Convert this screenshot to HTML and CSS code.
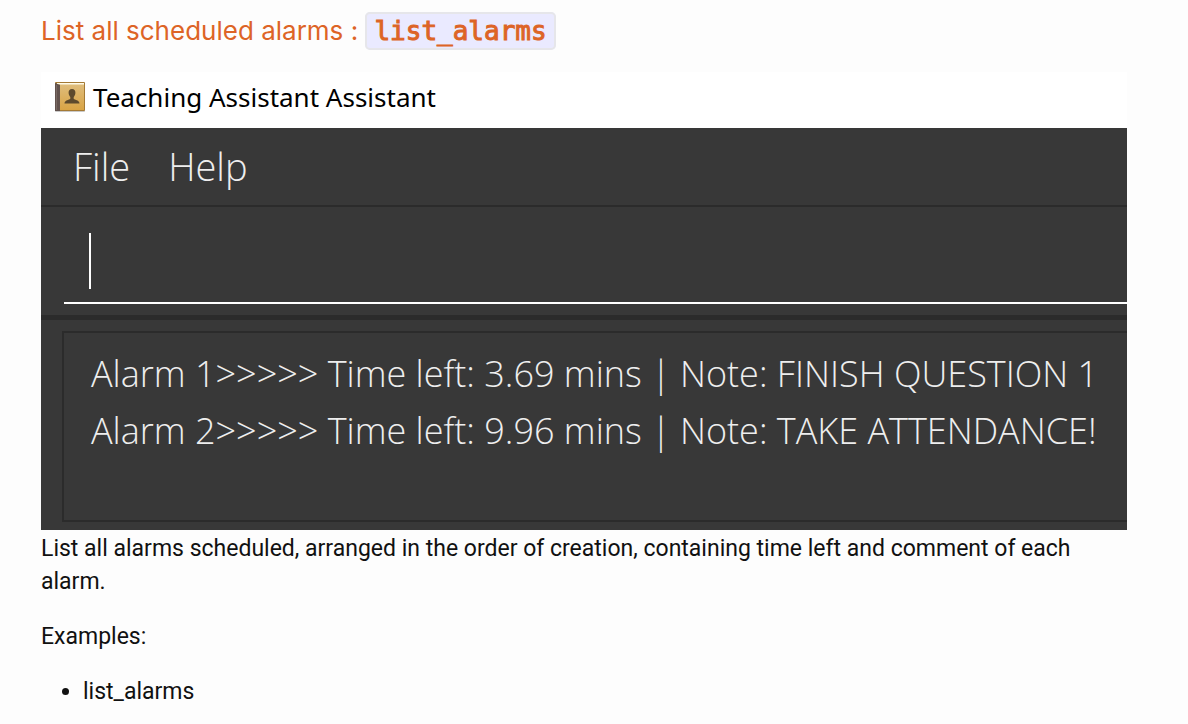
FILE: index.html
```html
<!DOCTYPE html>
<html lang="en">
<head>
<meta charset="utf-8">
<meta name="viewport" content="width=device-width, initial-scale=1">
<title>List all scheduled alarms</title>
<link rel="stylesheet" href="styles.css">
</head>
<body>
<main class="content">
  <h3 class="heading">List all scheduled alarms : <code class="chip">list_alarms</code></h3>
  <section class="app" aria-label="Teaching Assistant Assistant">
    <header class="titlebar">
      <svg class="app-icon" viewBox="0 0 32 32" aria-hidden="true">
        <defs>
          <linearGradient id="cover" x1="0" y1="0" x2="0" y2="1">
            <stop offset="0" stop-color="#dfbd7c"/>
            <stop offset="1" stop-color="#d9a445"/>
          </linearGradient>
        </defs>
        <rect x="1" y="29" width="30" height="2" rx="1" fill="#c9c9c9"/>
        <rect x="1" y="1" width="30" height="29" rx="1" fill="#a47a35"/>
        <rect x="6" y="3" width="24" height="26" fill="url(#cover)"/>
        <rect x="3" y="2" width="27" height="1.500" fill="#fffbe8"/>
        <path d="M1 2l5 2v26H1z" fill="#62524d"/>
        <path d="M2.500 4v25" stroke="#796a64"/>
        <path d="M18 8c-2.500 0-3.600 1.700-3.400 4 .1 1.700.9 3 1.700 4v1.800c-1.200 1.200-5.600 1.400-5.800 4.700h15c-.2-3.300-4.600-3.500-5.800-4.700V16c.8-1 1.600-2.300 1.700-4 .2-2.300-.9-4-3.400-4z" fill="#5d4a2d"/>
      </svg>
      <span>Teaching Assistant Assistant</span>
    </header>
    <nav class="menubar">
      <button class="menu" type="button">File</button>
      <button class="menu" type="button">Help</button>
    </nav>
    <div class="command">
      <div class="field">
        <input class="command-input" type="text" aria-label="Command">
        <span class="caret"></span>
      </div>
    </div>
    <div class="result">
      <div class="result-box">
        <p class="alarm">Alarm 1&gt;&gt;&gt;&gt;&gt; Time left: 3.69 mins | Note: FINISH QUESTION 1</p>
        <p class="alarm">Alarm 2&gt;&gt;&gt;&gt;&gt; Time left: 9.96 mins | Note: TAKE ATTENDANCE!</p>
      </div>
    </div>
  </section>
  <p class="text">List all alarms scheduled, arranged in the order of creation, containing time left and comment of each alarm.</p>
  <p class="text">Examples:</p>
  <ul class="examples">
    <li>list_alarms</li>
  </ul>
</main>
</body>
</html>
```

FILE: styles.css
```css
* { box-sizing: border-box; }

body {
  margin: 0;
  background: #fdfdfd;
  color: #111;
  font: 23px/33px Roboto, "Liberation Sans", sans-serif;
}

.content { padding: 10px 61px 0 41px; }

.heading {
  margin: 0 0 20px;
  color: #dd6426;
  font: 400 26px/42px Inter, "Liberation Sans", sans-serif;
}

.chip {
  padding: 2px 7px;
  border: 2px solid #e6e6ea;
  border-radius: 5px;
  background: #eaeaff;
  font: 26px/30px "DejaVu Sans Mono", monospace;
  -webkit-text-stroke: 1px #dd6426;
}

.app {
  overflow: hidden;
  margin-bottom: 2px;
  background: #383838;
  color: #fff;
  font-family: "Open Sans", "Noto Sans", sans-serif;
}

.titlebar {
  display: flex;
  align-items: center;
  gap: 7px;
  height: 56px;
  padding: 0 13px 6px;
  background: #fff;
  color: #000;
  font-family: "Noto Sans", sans-serif;
  font-size: 26px;
}

.app-icon { width: 32px; height: 32px; }

.menubar {
  display: flex;
  gap: 38px;
  height: 79px;
  padding: 0 32px;
  border-bottom: 2px solid #2b2b2b;
}

.menu {
  padding: 0 0 2px;
  border: 0;
  background: none;
  color: #eee;
  font: 300 38px "Open Sans", sans-serif;
}

.command {
  padding: 18px 0 11px 23px;
  border-bottom: 5px solid #2b2b2b;
}

.field {
  position: relative;
  border-bottom: 2px solid #fff;
}

.command-input {
  display: block;
  width: 100%;
  height: 77px;
  padding: 0 26px;
  border: 0;
  outline: 0;
  background: none;
  color: #fff;
  font: 300 38px "Open Sans", sans-serif;
}

.caret {
  position: absolute;
  top: 8px;
  left: 25px;
  width: 2px;
  height: 56px;
  background: #fff;
}

.result { padding: 11px 0 8px 21px; }

.result-box {
  min-height: 191px;
  padding: 12px 0 0 27px;
  border: 2px solid #2b2b2b;
  border-right: 0;
}

.alarm {
  margin: 0;
  color: #eee;
  font-size: 36px;
  font-weight: 300;
  line-height: 57px;
  white-space: nowrap;
}

.text { margin: 0 0 22px; }

.examples { margin: 0; padding-left: 42px; }
```
